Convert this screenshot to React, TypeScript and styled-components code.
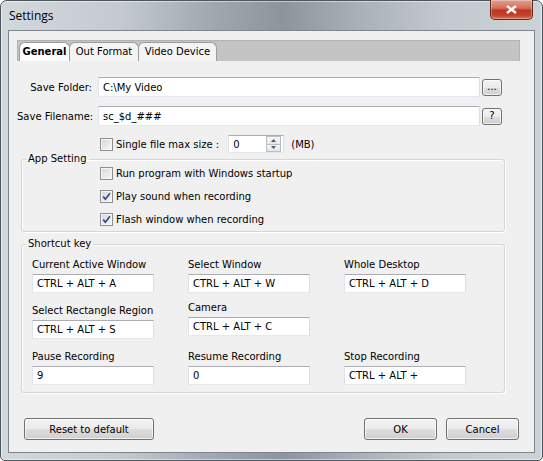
import styled, { createGlobalStyle } from "styled-components";

const GlobalStyle = createGlobalStyle`
  html, body {
    margin: 0;
    padding: 0;
    background: #ffffff;
  }
  body {
    font-family: "DejaVu Sans", "Liberation Sans", sans-serif;
    font-size: 10px;
    color: #000000;
  }
  * {
    box-sizing: border-box;
  }
`;

const Window = styled.div`
  width: 543px;
  height: 461px;
  display: flex;
  flex-direction: column;
  border: 1px solid #4d555d;
  border-radius: 7px 7px 5px 5px;
  padding: 0 7px 7px 7px;
  background: linear-gradient(
    90deg,
    #d3d8dd 0%,
    #c4cad0 22%,
    #9ea6ae 40%,
    #8c949c 52%,
    #a9b0b7 66%,
    #c4c9cf 82%,
    #cdd2d7 100%
  );
  box-shadow: inset 0 0 0 1px rgba(255, 255, 255, 0.5);
`;

const TitleBar = styled.div`
  height: 29px;
  display: flex;
  align-items: flex-start;
`;

const Title = styled.span`
  font-family: "Open Sans", "Noto Sans", sans-serif;
  font-size: 12px;
  line-height: 29px;
  padding-left: 1px;
  color: #000;
`;

const CloseButton = styled.div`
  margin: -1px 2px 0 auto;
  width: 43px;
  height: 20px;
  border: 1px solid #5a2a24;
  border-top: none;
  border-radius: 0 0 5px 5px;
  background: linear-gradient(180deg, #e2a08c 0%, #d4705a 42%, #bd3620 55%, #c2422a 80%, #d97458 100%);
  box-shadow: inset 0 0 0 1px rgba(255, 255, 255, 0.3);
  display: flex;
  align-items: center;
  justify-content: center;
`;

const Client = styled.div`
  flex: 1;
  display: flex;
  flex-direction: column;
  background: #f0f0f0;
  border: 1px solid #7d848b;
`;

const TabControl = styled.div`
  margin: 9px 14px 0 8px;
`;

const TabStrip = styled.div`
  height: 21px;
  display: flex;
  align-items: flex-end;
  padding-left: 1px;
  background: #c4c4c4;
  border: 1px solid #b3b3b3;
  border-bottom: none;
`;

const Tab = styled.div<{ $active?: boolean; $width: number }>`
  width: ${(p) => p.$width}px;
  height: 19px;
  line-height: 18px;
  text-align: center;
  white-space: nowrap;
  font-weight: ${(p) => (p.$active ? "bold" : "normal")};
  background: ${(p) => (p.$active ? "#ffffff" : "#f4f4f4")};
  border: 1px solid #9c9c9c;
  border-bottom: none;
  border-radius: 6px 6px 0 0;
  margin-right: -1px;
`;

const Page = styled.div`
  display: flex;
  flex-direction: column;
  padding-top: 16px;
`;

const FormRow = styled.div`
  display: flex;
  align-items: center;
  height: 20px;
  margin-bottom: 9px;
`;

const FieldLabel = styled.span`
  width: 75px;
  text-align: right;
  margin-right: 6px;
  white-space: nowrap;
`;

const TextBox = styled.div<{ $width: number; $height?: number }>`
  width: ${(p) => p.$width}px;
  height: ${(p) => p.$height ?? 20}px;
  background: #ffffff;
  border: 1px solid;
  border-color: #abadb3 #dbdfe6 #e3e9ef #e2e3ea;
  padding-left: 4px;
  display: flex;
  align-items: center;
  white-space: nowrap;
`;

const SmallButton = styled.div`
  width: 20px;
  height: 17px;
  margin-left: 2px;
  border: 1px solid #707070;
  border-radius: 3px;
  background: linear-gradient(180deg, #f2f2f2 0%, #ebebeb 50%, #dddddd 51%, #cfcfcf 100%);
  box-shadow: inset 0 0 0 1px rgba(255, 255, 255, 0.7);
  display: flex;
  align-items: center;
  justify-content: center;
  font-size: 10px;
  line-height: 1;
`;

const CheckRow = styled.div`
  display: flex;
  align-items: center;
  height: 23px;
`;

const CheckBox = styled.span`
  width: 13px;
  height: 13px;
  flex: none;
  border: 1px solid #8e8f8f;
  background: linear-gradient(135deg, #d3d6da 0%, #f4f4f4 90%);
  box-shadow: inset 0 0 0 1px #f6f6f6;
  display: flex;
  align-items: center;
  justify-content: center;
  margin-right: 3px;
`;

const SizeRow = styled.div`
  display: flex;
  align-items: center;
  height: 18px;
  padding-left: 83px;
`;

const SpinBox = styled.div`
  width: 56px;
  height: 18px;
  margin-left: 9px;
  display: flex;
  align-items: center;
  background: #ffffff;
  border: 1px solid;
  border-color: #abadb3 #dbdfe6 #e3e9ef #e2e3ea;
  padding-left: 4px;
`;

const SpinText = styled.span`
  flex: 1;
`;

const SpinButtons = styled.div`
  width: 15px;
  height: 16px;
  margin-right: 2px;
  display: flex;
  flex-direction: column;
`;

const SpinArrow = styled.div<{ $down?: boolean }>`
  flex: 1;
  border: 1px solid #b7bec6;
  border-top: ${(p) => (p.$down ? "none" : "1px solid #b7bec6")};
  background: linear-gradient(180deg, #f6f7f8 0%, #e4e7ea 100%);
  display: flex;
  align-items: center;
  justify-content: center;
`;

const Unit = styled.span`
  margin-left: 7px;
`;

const Group = styled.fieldset<{ $top?: number }>`
  width: 484px;
  margin: ${(p) => p.$top ?? 0}px 0 0 4px;
  padding: 0;
  border: 1px solid #d5d5d5;
  border-radius: 3px;
  box-shadow: 1px 1px 0 #ffffff, inset 1px 1px 0 #ffffff;
`;

const Legend = styled.legend`
  margin-left: 4px;
  padding: 0 2px;
  line-height: 12px;
`;

const CheckList = styled.div`
  margin-top: -3px;
  padding: 0 0 0 78px;
  display: flex;
  flex-direction: column;
`;

const ShortcutGrid = styled.div`
  display: grid;
  grid-template-columns: repeat(3, 122px);
  column-gap: 34px;
  row-gap: 12px;
  padding: 9px 0 7px 10px;
`;

const Shortcut = styled.div<{ $raise?: number }>`
  display: flex;
  flex-direction: column;
  gap: 3px;
  margin-top: ${(p) => -(p.$raise ?? 0)}px;
`;

const ShortcutName = styled.span`
  line-height: 12px;
  white-space: nowrap;
`;

const ButtonBar = styled.div`
  margin-top: auto;
  display: flex;
  align-items: center;
  gap: 9px;
  padding: 0 15px 12px 15px;
`;

const PushButton = styled.div<{ $width: number }>`
  width: ${(p) => p.$width}px;
  height: 22px;
  border: 1px solid #707070;
  border-radius: 3px;
  background: linear-gradient(180deg, #f2f2f2 0%, #ebebeb 50%, #dddddd 51%, #cfcfcf 100%);
  box-shadow: inset 0 0 0 1px rgba(255, 255, 255, 0.7);
  display: flex;
  align-items: center;
  justify-content: center;
`;

const Spacer = styled.div`
  flex: 1;
`;

const Check = () => (
  <svg width="9" height="9" viewBox="0 0 9 9">
    <path d="M1.2 4.6 L3.4 7.2 L7.9 1.3" stroke="#2d4b8f" strokeWidth="1.7" fill="none" />
  </svg>
);

const Arrow = ({ down }: { down?: boolean }) => (
  <svg width="5" height="3" viewBox="0 0 5 3">
    <path d={down ? "M0 0 H5 L2.5 3 Z" : "M0 3 H5 L2.5 0 Z"} fill="#4e5a66" />
  </svg>
);

const shortcuts = [
  { name: "Current Active Window", value: "CTRL + ALT + A" },
  { name: "Select Window", value: "CTRL + ALT + W" },
  { name: "Whole Desktop", value: "CTRL + ALT + D" },
  { name: "Select Rectangle Region", value: "CTRL + ALT + S" },
  { name: "Camera", value: "CTRL + ALT + C", raise: 3 },
  null,
  { name: "Pause Recording", value: "9" },
  { name: "Resume Recording", value: "0" },
  { name: "Stop Recording", value: "CTRL + ALT +" },
];

const options = [
  { text: "Run program with Windows startup", checked: false },
  { text: "Play sound when recording", checked: true },
  { text: "Flash window when recording", checked: true },
];

function App() {
  return (
    <>
      <GlobalStyle />
      <Window>
        <TitleBar>
          <Title>Settings</Title>
          <CloseButton>
            <svg width="11" height="9" viewBox="0 0 11 9">
              <path d="M1 1 L10 8 M10 1 L1 8" stroke="#ffffff" strokeWidth="2.4" />
            </svg>
          </CloseButton>
        </TitleBar>
        <Client>
          <TabControl>
            <TabStrip>
              <Tab $active $width={51}>General</Tab>
              <Tab $width={70}>Out Format</Tab>
              <Tab $width={79}>Video Device</Tab>
            </TabStrip>
            <Page>
              <FormRow>
                <FieldLabel>Save Folder:</FieldLabel>
                <TextBox $width={382}>C:\My Video</TextBox>
                <SmallButton>...</SmallButton>
              </FormRow>
              <FormRow>
                <FieldLabel>Save Filename:</FieldLabel>
                <TextBox $width={382}>sc_$d_###</TextBox>
                <SmallButton>?</SmallButton>
              </FormRow>
              <SizeRow>
                <CheckBox />
                <span>Single file max size :</span>
                <SpinBox>
                  <SpinText>0</SpinText>
                  <SpinButtons>
                    <SpinArrow>
                      <Arrow />
                    </SpinArrow>
                    <SpinArrow $down>
                      <Arrow down />
                    </SpinArrow>
                  </SpinButtons>
                </SpinBox>
                <Unit>(MB)</Unit>
              </SizeRow>
              <Group>
                <Legend>App Setting</Legend>
                <CheckList>
                  {options.map((o) => (
                    <CheckRow key={o.text}>
                      <CheckBox>{o.checked && <Check />}</CheckBox>
                      <span>{o.text}</span>
                    </CheckRow>
                  ))}
                </CheckList>
              </Group>
              <Group $top={6}>
                <Legend>Shortcut key</Legend>
                <ShortcutGrid>
                  {shortcuts.map((s, i) =>
                    s ? (
                      <Shortcut key={s.name} $raise={s.raise}>
                        <ShortcutName>{s.name}</ShortcutName>
                        <TextBox $width={122} $height={19}>
                          {s.value}
                        </TextBox>
                      </Shortcut>
                    ) : (
                      <div key={i} />
                    )
                  )}
                </ShortcutGrid>
              </Group>
            </Page>
          </TabControl>
          <ButtonBar>
            <PushButton $width={130}>Reset to default</PushButton>
            <Spacer />
            <PushButton $width={73}>OK</PushButton>
            <PushButton $width={73}>Cancel</PushButton>
          </ButtonBar>
        </Client>
      </Window>
    </>
  );
}

export default App;
